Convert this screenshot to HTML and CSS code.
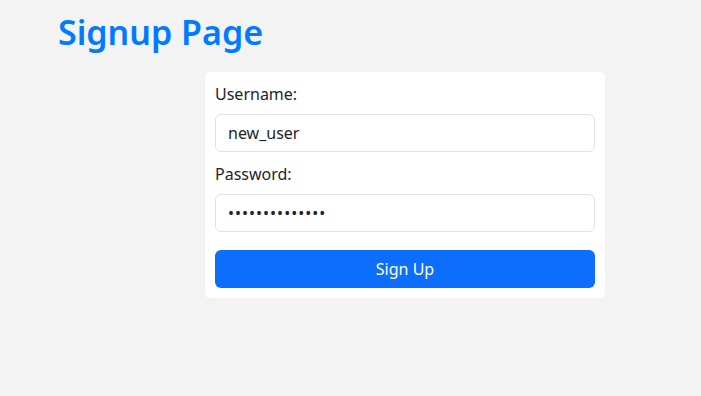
FILE: index.html
```html
<!DOCTYPE html>
<html lang="en">
<head>
    <meta charset="UTF-8">
    <meta name="viewport" content="width=device-width, initial-scale=1.0">
    <title>Signup Page</title>
    <link rel="stylesheet" href="styles.css">
</head>
<body>
    <h1 class="page-title">Signup Page</h1>
    <div class="card">
        <form id="signupForm">
            <label for="username" class="form-label">Username:</label>
            <input type="text" id="username" class="form-control" value="new_user">
            <label for="password" class="form-label">Password:</label>
            <input type="password" id="password" class="form-control password" value="securepass123!">
            <button type="submit" class="btn">Sign Up</button>
        </form>
    </div>
</body>
</html>
```

FILE: styles.css
```css
body {
    font-family: 'Noto Sans', sans-serif;
    background-color: #f3f3f3;
    color: #212529;
    margin: 0;
    padding: 0;
}
.page-title {
    color: #007bff;
    font-size: 34px;
    font-weight: 600;
    line-height: 1.2;
    margin: 12px 0 0 58px;
}
.card {
    background: white;
    border-radius: 5px;
    width: 400px;
    box-sizing: border-box;
    padding: 10px;
    margin: 19px 0 0 205px;
}
.form-label {
    display: block;
    font-size: 16px;
    line-height: 24px;
    margin-bottom: 8px;
}
.form-control {
    display: block;
    width: 100%;
    box-sizing: border-box;
    height: 38px;
    padding: 6px 12px;
    font-family: inherit;
    font-size: 16px;
    color: #212529;
    border: 1px solid #dee2e6;
    border-radius: 6px;
    margin-bottom: 10px;
}
.password {
    letter-spacing: 1px;
}
.btn {
    display: block;
    width: 100%;
    height: 38px;
    margin-top: 18px;
    background-color: #0d6efd;
    color: white;
    border: none;
    border-radius: 6px;
    font-family: inherit;
    font-size: 16px;
    cursor: pointer;
}
```
